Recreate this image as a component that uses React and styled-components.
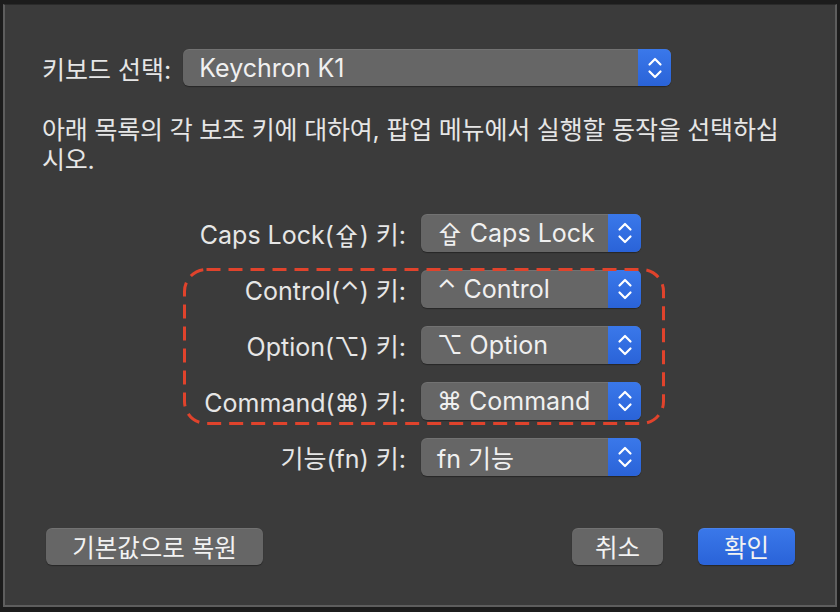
import React from "react";
import styled, { createGlobalStyle } from "styled-components";

const GlobalStyle = createGlobalStyle`
  html, body {
    margin: 0;
    background: #1c1c1c;
  }
  body {
    font-family: Inter, "Noto Sans CJK KR", "DejaVu Sans", sans-serif;
    color: #e6e6e6;
    -webkit-font-smoothing: antialiased;
  }
`;

const Sheet = styled.div`
  box-sizing: border-box;
  width: 834px;
  height: 603px;
  margin: 4px 3px 0 3px;
  background: #3b3b3b;
  border: 2px solid #5e5e5e;
  border-top: 1px solid #2a2a2a;
  padding: 44px 38px 0 37px;
  display: flex;
  flex-direction: column;
`;

const TopRow = styled.div`
  display: flex;
  align-items: center;
  gap: 12px;
  height: 37px;
`;

const Label = styled.span`
  font-size: 25px;
  white-space: nowrap;
`;

const SelectBox = styled.div`
  box-sizing: border-box;
  width: ${(p) => p.$width}px;
  height: ${(p) => p.$height || 38}px;
  display: flex;
  align-items: stretch;
  border-radius: 6px;
  overflow: hidden;
  background: #666666;
  box-shadow: 0 1px 1px rgba(0, 0, 0, 0.35), inset 0 1px 0 rgba(255, 255, 255, 0.08);
`;

const SelectText = styled.span`
  flex: 1;
  display: flex;
  align-items: center;
  padding-left: 16px;
  font-size: 25px;
  color: #f0f0f0;
  white-space: nowrap;
`;

const Stepper = styled.span`
  width: 33px;
  display: flex;
  align-items: center;
  justify-content: center;
  background: linear-gradient(#3a78ea, #2a63d8);
`;

const Paragraph = styled.p`
  margin: 29px 0 0 0;
  font-size: 25px;
  line-height: 30px;
  letter-spacing: -0.2px;
`;

const Rows = styled.div`
  position: relative;
  margin-top: 39px;
  display: grid;
  grid-template-columns: 364px 220px;
  column-gap: 15px;
  row-gap: 18px;
  align-items: center;
`;

const RowLabel = styled.span`
  font-size: 25px;
  text-align: right;
  white-space: nowrap;
`;

const Highlight = styled.svg`
  position: absolute;
  left: 141px;
  top: 54px;
  pointer-events: none;
`;

const Footer = styled.div`
  margin-top: 52px;
  display: flex;
  align-items: center;
  padding: 0 2px 0 4px;
`;

const Spacer = styled.div`
  flex: 1;
`;

const Button = styled.button`
  box-sizing: border-box;
  width: ${(p) => p.$width}px;
  height: 37px;
  margin-left: ${(p) => p.$gap || 0}px;
  border: none;
  border-radius: 6px;
  font-family: inherit;
  font-size: 24.5px;
  color: #f2f2f2;
  background: ${(p) => (p.$primary ? "linear-gradient(#3a78ea, #2a63d8)" : "#666666")};
  box-shadow: 0 1px 1px rgba(0, 0, 0, 0.35), inset 0 1px 0 rgba(255, 255, 255, 0.08);
  padding: 0;
`;

const Chevrons = () => (
  <svg width="16" height="26" viewBox="0 0 16 26" fill="none" stroke="#ffffff" strokeWidth="2.2" strokeLinecap="round" strokeLinejoin="round">
    <path d="M2.5 9.5 L8 4 L13.5 9.5" />
    <path d="M2.5 16.5 L8 22 L13.5 16.5" />
  </svg>
);

const Select = ({ value, width, height }) => (
  <SelectBox $width={width} $height={height}>
    <SelectText>{value}</SelectText>
    <Stepper>
      <Chevrons />
    </Stepper>
  </SelectBox>
);

const modifiers = [
  { label: "Caps Lock(⇪) 키:", value: "⇪ Caps Lock" },
  { label: "Control(⌃) 키:", value: "⌃ Control" },
  { label: "Option(⌥) 키:", value: "⌥ Option" },
  { label: "Command(⌘) 키:", value: "⌘ Command" },
  { label: "기능(fn) 키:", value: "fn 기능" },
];

export default function App() {
  return (
    <>
      <GlobalStyle />
      <Sheet>
        <TopRow>
          <Label>키보드 선택:</Label>
          <Select value="Keychron K1" width={488} height={37} />
        </TopRow>
        <Paragraph>
          아래 목록의 각 보조 키에 대하여, 팝업 메뉴에서 실행할 동작을 선택하십
          <br />
          시오.
        </Paragraph>
        <Rows>
          {modifiers.map((m) => (
            <React.Fragment key={m.label}>
              <RowLabel>{m.label}</RowLabel>
              <Select value={m.value} width={220} />
            </React.Fragment>
          ))}
          <Highlight width="482" height="157" viewBox="0 0 482 157">
            <rect
              x="1.5"
              y="1.5"
              width="479"
              height="154"
              rx="22"
              fill="none"
              stroke="#e0432c"
              strokeWidth="3"
              strokeDasharray="14 8"
            />
          </Highlight>
        </Rows>
        <Footer>
          <Button $width={217}>기본값으로 복원</Button>
          <Spacer />
          <Button $width={91}>취소</Button>
          <Button $width={97} $gap={35} $primary>
            확인
          </Button>
        </Footer>
      </Sheet>
    </>
  );
}
